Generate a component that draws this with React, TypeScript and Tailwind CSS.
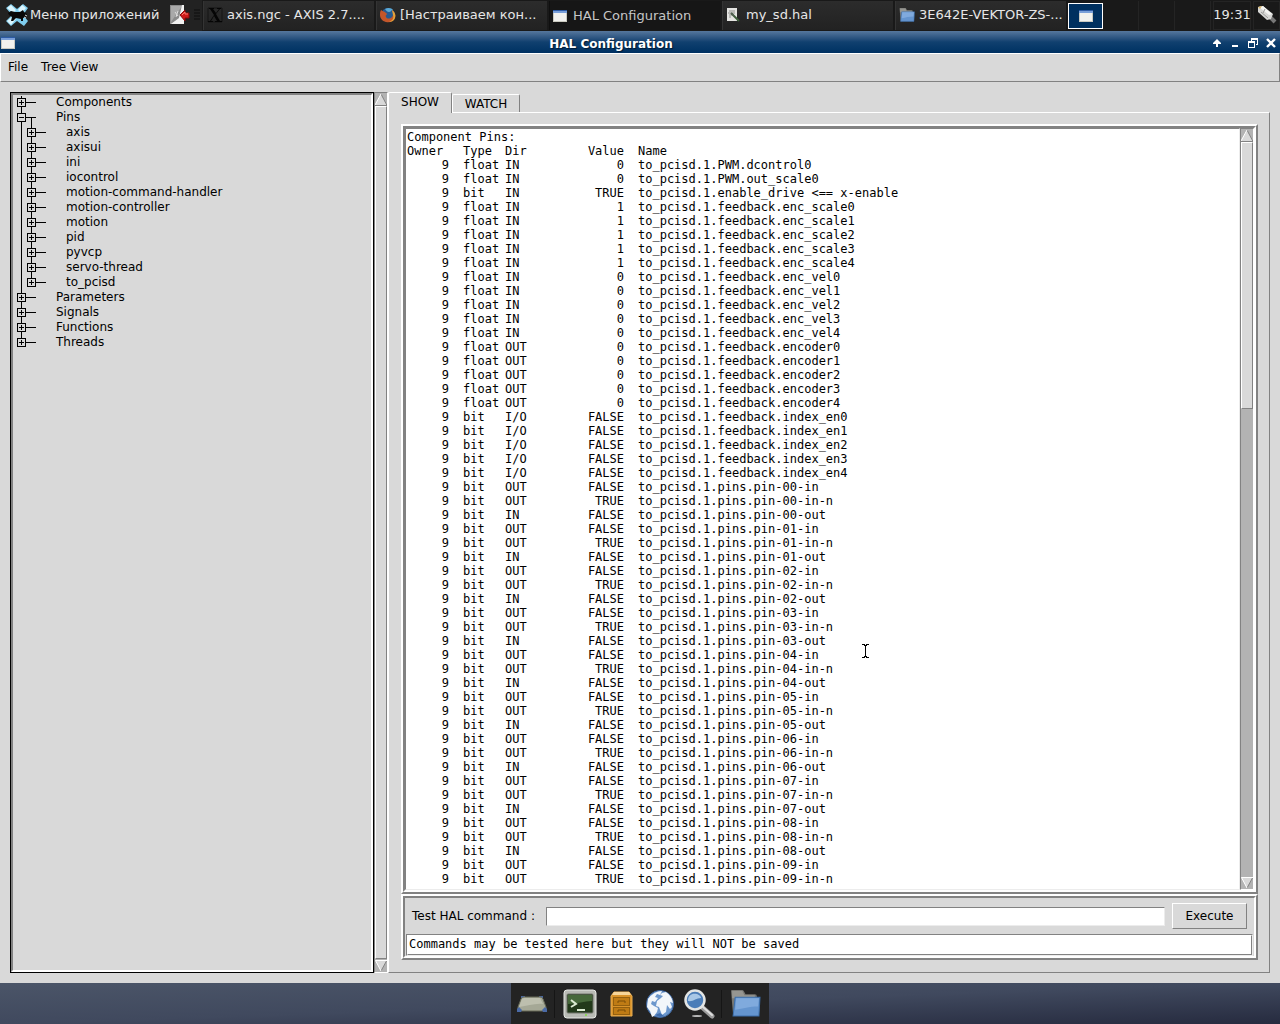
import { useState, type ReactNode } from 'react';

const sans = "font-['DejaVu_Sans','Liberation_Sans',sans-serif]";
const mono = "font-['DejaVu_Sans_Mono','Liberation_Mono',monospace]";
const raised = 'border border-t-white border-l-white border-b-[#828282] border-r-[#828282]';
const sunken = 'border border-t-[#828282] border-l-[#828282] border-b-[#ececec] border-r-[#ececec]';

type Pin = { type: string; dir: string; value: string; name: string };

const pin = (type: string, dir: string, value: string, name: string): Pin => ({ type, dir, value, name });
const five = [0, 1, 2, 3, 4];

const PINS: Pin[] = [
  pin('float', 'IN', '0', 'PWM.dcontrol0'),
  pin('float', 'IN', '0', 'PWM.out_scale0'),
  pin('bit', 'IN', 'TRUE', 'enable_drive <== x-enable'),
  ...five.map((n) => pin('float', 'IN', '1', `feedback.enc_scale${n}`)),
  ...five.map((n) => pin('float', 'IN', '0', `feedback.enc_vel${n}`)),
  ...five.map((n) => pin('float', 'OUT', '0', `feedback.encoder${n}`)),
  ...five.map((n) => pin('bit', 'I/O', 'FALSE', `feedback.index_en${n}`)),
  ...[0, 1, 2, 3, 4, 5, 6, 7, 8].flatMap((n) => [
    pin('bit', 'OUT', 'FALSE', `pins.pin-0${n}-in`),
    pin('bit', 'OUT', 'TRUE', `pins.pin-0${n}-in-n`),
    pin('bit', 'IN', 'FALSE', `pins.pin-0${n}-out`),
  ]),
  pin('bit', 'OUT', 'FALSE', 'pins.pin-09-in'),
  pin('bit', 'OUT', 'TRUE', 'pins.pin-09-in-n'),
];

const TREE = [
  { name: 'Components', children: [] },
  {
    name: 'Pins',
    children: [
      'axis', 'axisui', 'ini', 'iocontrol', 'motion-command-handler', 'motion-controller',
      'motion', 'pid', 'pyvcp', 'servo-thread', 'to_pcisd',
    ],
  },
  { name: 'Parameters', children: [] },
  { name: 'Signals', children: [] },
  { name: 'Functions', children: [] },
  { name: 'Threads', children: [] },
];

function WindowIcon() {
  return (
    <svg width="14" height="12" viewBox="0 0 14 12" className="shrink-0">
      <rect width="14" height="12" fill="#c9c9c0" />
      <rect x="1" y="3" width="12" height="8" fill="#f1f1ee" />
      <rect width="14" height="3" fill="#7a9fd8" />
      <rect width="14" height="1" fill="#2c5aa5" />
    </svg>
  );
}

function XfceIcon() {
  return (
    <svg width="22" height="22" viewBox="0 0 22 22" className="shrink-0">
      <path d="M0 4 5 0l6 5 6-5 5 4-5 7 5 6-4 5-7-5-6 5-5-5 6-6z" fill="#7fcdee" />
      <path d="M1 4 5 1l5 5-3 3zM12 6l4-5 4 3-4 5zM1 17l5-4 4 2-5 6z" fill="#dcf5fd" />
      <path d="M2 9 5 7l4 1h5l3-2 1 2 3 2-1 3-3 1v3h-2v-2l-5-1-3 3H5l1-4-3-2z" fill="#080808" />
      <path d="m19 11 2 1m-3 1 2 1" stroke="#d6d6d6" strokeWidth="1" />
    </svg>
  );
}

function ExitIcon() {
  return (
    <svg width="21" height="21" viewBox="0 0 21 21">
      <path d="M1 1h14v19H1z" fill="#d9d9d9" />
      <path d="M1 1h13L10 15 2 20H1z" fill="#8b8b8b" />
      <path d="M2 2h11L2 18z" fill="#a9a9a9" />
      <path d="M10 14 2 20h13V1h-2z" fill="#f2f2f2" />
      <path d="m6 8 3 4M9 7l-2 6" stroke="#ddd" />
      <path d="m11 11 5-5v3h4v5h-4v3z" fill="#cf1a1a" stroke="#8c0b0b" />
      <path d="m13 11 3-3v2h3" fill="none" stroke="#ff7a6e" />
    </svg>
  );
}

function XorgIcon() {
  return (
    <svg width="16" height="16" viewBox="0 0 16 16">
      <path d="M1 1h14v14H1z" fill="none" stroke="#141414" />
      <path d="M2 1h5v1H6l3 4 3-4h-2V1h4v1h-1L9 7l4 7h2v1H8v-1h2L7 9l-3 5h2v1H1v-1h2l4-6-4-6H2z" fill="#050505" />
    </svg>
  );
}

function FirefoxIcon() {
  return (
    <svg width="16" height="16" viewBox="0 0 16 16">
      <circle cx="8" cy="8" r="7" fill="#275a91" />
      <path d="M5 2c3-2 7-1 8 1-2 0-2 2-4 2S6 3 5 2z" fill="#5aa9d6" />
      <path d="M1 3c1 1 2 1 4 2 0 1 2 1 2 2S5 8 6 10s4 2 6 0 1-5 0-7c3 2 4 5 3 8-1 3-5 5-9 4S0 11 0 8c0-2 0-3 1-5z" fill="#c4562a" />
      <path d="M12 3c3 2 4 5 3 8s-4 4-6 4c4-2 5-4 4-7z" fill="#e2a23a" />
    </svg>
  );
}

function EditorIcon() {
  return (
    <svg width="14" height="14" viewBox="0 0 14 14">
      <path d="M1 0h10v13H1z" fill="#e4e4e1" />
      <path d="M3 3h6M2 5h7M3 7h3M3 9h2" stroke="#8f8f8d" />
      <path d="m5 5 8 8" stroke="#3c5c3a" strokeWidth="2" />
      <path d="m5 5 3 3" stroke="#555" />
    </svg>
  );
}

function FolderIcon({ size = 16 }: { size?: number }) {
  return (
    <svg width={size} height={size} viewBox="0 0 30 30">
      <path d="M1 3q0-1 1-1h10q1 0 2 2l1 2h9q2 0 2 2v18H3z" fill="#777773" />
      <path d="M2 3h10l2 4h10v3H2z" fill="#969691" />
      <path d="M5 9h24l-1 18H3z" fill="#6595cf" stroke="#3c6fab" />
      <path d="M6 10h22l-1 8C18 18 13 20 5 21z" fill="#80aadd" />
    </svg>
  );
}

function MouseIcon() {
  return (
    <svg width="21" height="21" viewBox="0 0 21 21">
      <path d="m14 13 5 5" stroke="#777" strokeWidth="4" />
      <path d="m2 3 5-1 10 8-2 5-4 1L2 8z" fill="#d7d7d5" />
      <path d="m3 3 4-1 9 8-3 1z" fill="#f5f5f3" />
      <path d="m2 3 4-1-2 3z" fill="#d8b56a" />
      <path d="m5 8 7 6m-3-9-2 4" stroke="#9b9b99" />
    </svg>
  );
}

function TaskButton({ icon, children, active = false }: { icon: ReactNode; children: ReactNode; active?: boolean }) {
  return (
    <button
      className={
        'flex h-[29px] min-w-0 flex-1 items-center border-l pl-[3px] text-left text-[13px] whitespace-nowrap ' +
        (active
          ? 'border-[#0f0f0f] bg-[#161616] text-[#c6c6c6]'
          : 'border-[#343434] bg-linear-to-b from-[#2c2c2c] to-[#222222] pb-0.5 text-[#e6e6e6]')
      }
    >
      <span className="flex w-5 shrink-0 items-center">{icon}</span>
      <span className="truncate">{children}</span>
    </button>
  );
}

function Taskbar() {
  return (
    <header className="flex h-[31px] items-center bg-[#191919] text-[13px] text-[#e6e6e6]">
      <div className="flex h-full w-[202px] shrink-0 items-center bg-[#222222] pb-0.5">
        <button className="flex items-center gap-0.5 pl-1.5 whitespace-nowrap">
          <XfceIcon />
          Меню приложений
        </button>
        <button aria-label="Log out" className="ml-auto">
          <ExitIcon />
        </button>
        <svg width="6" height="12" viewBox="0 0 6 12" className="mr-0.5 ml-1">
          <path d="M0 1h6M0 4h6M0 7h6M0 10h6" stroke="#0d0d0d" />
        </svg>
      </div>
      <nav className="flex min-w-0 flex-1 gap-0.5 pl-px">
        <TaskButton icon={<XorgIcon />}>axis.ngc - AXIS 2.7....</TaskButton>
        <TaskButton icon={<FirefoxIcon />}>[Настраиваем кон...</TaskButton>
        <TaskButton icon={<WindowIcon />} active>HAL Configuration</TaskButton>
        <TaskButton icon={<EditorIcon />}>my_sd.hal</TaskButton>
        <TaskButton icon={<FolderIcon />}>3E642E-VEKTOR-ZS-...</TaskButton>
      </nav>
      <div className="flex shrink-0 items-center">
        <button aria-label="Workspace 1" className="ml-0.5 flex h-[26px] w-[35px] items-center justify-center border border-white bg-[#00305f]">
          <WindowIcon />
        </button>
        <button aria-label="Workspace 2" className="h-[29px] w-9 border-r border-[#242424]" />
        <button aria-label="Workspace 3" className="h-[29px] w-9 border-r border-[#242424]" />
        <button aria-label="Workspace 4" className="h-[29px] w-9 border-r border-[#242424]" />
        <time className="ml-0.5 flex h-[29px] w-[38px] items-center justify-center border border-[#242424] pb-0.5">19:31</time>
        <button aria-label="Mouse" className="ml-0.5 flex h-[29px] w-[27px] items-center justify-center border border-[#242424] pb-0.5">
          <MouseIcon />
        </button>
      </div>
    </header>
  );
}

function TitleBar() {
  return (
    <div className="flex h-[22px] items-center bg-linear-to-b from-[#56779d] via-[#10406f] to-[#003162] pt-px pr-1 pl-px text-white">
      <WindowIcon />
      <h1 className="flex-1 pt-0.5 pr-1.5 text-center text-[12px] font-bold [text-shadow:1px_1px_1px_#001a35]">HAL Configuration</h1>
      <div className="flex items-center gap-2">
        <button aria-label="Shade">
          <svg width="10" height="10" viewBox="0 0 10 10">
            <path d="M4 9V5" fill="none" stroke="#fff" strokeWidth="2" />
            <path d="M4 1 0 5v1h8V5z" fill="#fff" />
          </svg>
        </button>
        <button aria-label="Minimize">
          <svg width="9" height="10" viewBox="0 0 9 10">
            <path d="M1 7h6v2H1z" fill="#fff" />
          </svg>
        </button>
        <button aria-label="Restore">
          <svg width="10" height="10" viewBox="0 0 10 10" shapeRendering="crispEdges">
            <path d="M0 3h7v7H0zM1 5v4h5V5zM3 0h7v7H8V6h1V2H4v1H3z" fill="#fff" fillRule="evenodd" />
          </svg>
        </button>
        <button aria-label="Close">
          <svg width="10" height="10" viewBox="0 0 10 10">
            <path d="m1 1 8 8M9 1 1 9" stroke="#fff" strokeWidth="2.4" />
          </svg>
        </button>
      </div>
    </div>
  );
}

type Lines = { first?: boolean; last?: boolean; open?: boolean; child?: boolean };

function TreeLines({ first, last, open, child }: Lines) {
  const x = child ? 18 : 8;
  return (
    <svg width={child ? 53 : 43} height="15" fill="none" stroke="#000" shapeRendering="crispEdges" className="shrink-0">
      {child && <path d="M8.5 0v15" />}
      <path d={`M${x + 0.5} ${first ? 1 : 0}V${last ? 8 : 15}M${x + 5} 7.5h10`} />
      <rect x={x - 3.5} y="3.5" width="8" height="8" fill="#d9d9d9" />
      <path d={`M${x - 2} 7.5h5`} />
      {!open && <path d={`M${x + 0.5} 5v5`} />}
      {open && <path d={`M${x + 10.5} 7v8`} />}
    </svg>
  );
}

function Tree() {
  const [open, setOpen] = useState('Pins');
  return (
    <ul className="text-[12px] leading-[15px]">
      {TREE.map((node, i) => {
        const isOpen = open === node.name && node.children.length > 0;
        return (
          <li key={node.name}>
            <button className="flex h-[15px] items-center" aria-expanded={isOpen} onClick={() => setOpen(isOpen ? '' : node.name)}>
              <TreeLines first={i === 0} last={i === TREE.length - 1} open={isOpen} />
              {node.name}
            </button>
            {isOpen && (
              <ul>
                {node.children.map((name, j) => (
                  <li key={name}>
                    <button className="flex h-[15px] items-center">
                      <TreeLines child last={j === node.children.length - 1} />
                      {name}
                    </button>
                  </li>
                ))}
              </ul>
            )}
          </li>
        );
      })}
    </ul>
  );
}

function Arrow({ down = false }: { down?: boolean }) {
  return (
    <svg width="12" height="13" viewBox="0 0 12 13" className="shrink-0">
      {down ? (
        <>
          <path d="M0 1h12L6 12z" fill="#d9d9d9" />
          <path d="M12 1 6 12" stroke="#828282" />
          <path d="M12 1.5H.5L6 12" fill="none" stroke="#fff" />
        </>
      ) : (
        <>
          <path d="M6 1 0 12h12z" fill="#d9d9d9" />
          <path d="M0 12.5h12L6 1" fill="none" stroke="#828282" />
          <path d="M6 1 0 12" stroke="#fff" />
        </>
      )}
    </svg>
  );
}

function Scrollbar({ thumb }: { thumb: string }) {
  return (
    <div className="flex w-[14px] shrink-0 flex-col border border-t-[#828282] border-r-white border-b-white border-l-[#828282] bg-[#b3b3b3]">
      <Arrow />
      <div className="min-h-0 flex-1">
        <div className={`${raised} bg-[#d9d9d9] ${thumb}`} />
      </div>
      <Arrow down />
    </div>
  );
}

function Ridge({ children }: { children: ReactNode }) {
  return (
    <div className="border-2 border-t-white border-r-[#828282] border-b-[#828282] border-l-white">
      <div className="border-2 border-t-[#828282] border-r-white border-b-white border-l-[#828282]">{children}</div>
    </div>
  );
}

function PinTable() {
  return (
    <table className={`${mono} w-full table-fixed text-left text-[12px] leading-[14px] whitespace-pre`}>
      <caption className="text-left">Component Pins:</caption>
      <colgroup>
        <col className="w-[42px]" />
        <col className="w-14" />
        <col className="w-[63px]" />
        <col className="w-14" />
        <col />
      </colgroup>
      <thead>
        <tr>
          <th className="p-0 font-normal">Owner</th>
          <th className="p-0 pl-3.5 font-normal">Type</th>
          <th className="p-0 font-normal">Dir</th>
          <th className="p-0 text-right font-normal">Value</th>
          <th className="p-0 pl-3.5 font-normal">Name</th>
        </tr>
      </thead>
      <tbody>
        {PINS.map((p) => (
          <tr key={p.name}>
            <td className="p-0 text-right">9</td>
            <td className="p-0 pl-3.5">{p.type}</td>
            <td className="p-0">{p.dir}</td>
            <td className="p-0 text-right">{p.value}</td>
            <td className="p-0 pl-3.5">to_pcisd.1.{p.name}</td>
          </tr>
        ))}
      </tbody>
    </table>
  );
}

function Tabs() {
  return (
    <div role="tablist" className="flex h-5 items-end text-[12px]">
      <button
        role="tab"
        aria-selected="true"
        className="relative -mb-px flex h-[21px] w-16 items-center justify-center rounded-t-xs border border-t-white border-r-[#828282] border-b-0 border-l-white bg-[#d9d9d9] pb-0.5"
      >
        SHOW
      </button>
      <button
        role="tab"
        aria-selected="false"
        className="flex h-[18px] w-[68px] items-center justify-center rounded-t-xs border border-t-white border-r-[#828282] border-b-0 border-l-white"
      >
        WATCH
      </button>
    </div>
  );
}

function CommandPanel() {
  const [command, setCommand] = useState('');
  return (
    <Ridge>
      <form className="flex flex-col gap-[5px] pt-[5px] text-[12px]" onSubmit={(e) => e.preventDefault()}>
        <div className="flex items-center pr-[7px] pl-[7px]">
          <label htmlFor="command" className="w-[134px] shrink-0">Test HAL command :</label>
          <input
            id="command"
            value={command}
            onChange={(e) => setCommand(e.target.value)}
            className={`${sunken} ${mono} h-[19px] min-w-0 flex-1 bg-white px-0.5 outline-none`}
          />
          <button className={`${raised} ml-[7px] h-[26px] w-[75px]`}>Execute</button>
        </div>
        <div className={`${sunken} mx-px bg-white`}>
          <p className={`${mono} border border-t-white border-r-[#828282] border-b-[#828282] border-l-white pb-0.5 pl-px leading-4`}>
            Commands may be tested here but they will NOT be saved
          </p>
        </div>
      </form>
    </Ridge>
  );
}

function Dock() {
  return (
    <footer className="flex flex-1 justify-center bg-linear-to-br from-[#4b5568] via-[#40495e] to-[#262b3f]">
      <nav className="flex h-[41px] w-[258px] items-center bg-[#232323] px-[5px]">
        <button aria-label="Show desktop" className="w-[38px]">
          <svg width="32" height="32" viewBox="0 0 32 32">
            <path d="M5 8h4v4H5zM23 8h4v4h-4z" fill="#49679e" />
            <path d="M8 9h16q2 0 3 2l3 8q1 4-2 4H4q-3 0-2-4l3-8q1-2 3-2z" fill="#a5a896" stroke="#666957" />
            <path d="M8 10h16l3 6C19 15 12 18 3 19l3-8z" fill="#bdbfae" />
            <path d="M1 24v-3l2-2 3 3-1 2zM31 24v-3l-2-2-3 3 1 2z" fill="#4a6aa6" />
          </svg>
        </button>
        <span className="h-7 w-px bg-[#151515]" />
        <button aria-label="Terminal" className="ml-2">
          <svg width="34" height="30" viewBox="0 0 34 30">
            <rect x="1" y="1" width="32" height="28" rx="3" fill="#b8bab4" stroke="#e8e9e6" />
            <rect x="4" y="5" width="26" height="19" rx="1" fill="#22391a" stroke="#73766d" />
            <path d="M5 6h24v6c-8 0-14 3-24 3z" fill="#46683a" />
            <path d="m8 11 5 4-5 3" fill="none" stroke="#dcebd2" strokeWidth="2" />
            <path d="M14 21h8" stroke="#dcebd2" strokeWidth="2" />
            <circle cx="23" cy="26" r="1" fill="#7ee03a" />
          </svg>
        </button>
        <button aria-label="File manager" className="ml-[13px]">
          <svg width="23" height="28" viewBox="0 0 23 28">
            <path d="M4 2h15l3 4v20H1V6z" fill="#d9932a" stroke="#e9ad50" />
            <path d="M4 2h15l2 3H2z" fill="#f6d59a" />
            <rect x="3.5" y="7.5" width="16" height="8" fill="#bf7b14" stroke="#94600f" />
            <rect x="3.5" y="17.5" width="16" height="7" fill="#bf7b14" stroke="#94600f" />
            <path d="M8 13v-2h7v2M8 22v-2h7v2" fill="none" stroke="#7b4e08" />
          </svg>
        </button>
        <button aria-label="Web browser" className="ml-3">
          <svg width="30" height="30" viewBox="0 0 30 30">
            <circle cx="15" cy="15" r="13.5" fill="#6c97cc" stroke="#3d649c" />
            <path d="M3 10q6-8 14-8l-2 4-3-1-2 3 3 1-3 4-3-1-1 3 3 2 4 2-1 4-3 4-2 1-2-6-3-4z" fill="#f2f6fa" />
            <path d="m17 4 4-1q6 4 7 11l-3-1 2 5-2 2-3-4-1 7-4 3-3-8-3-1 1-5 4-3 2-2-3-1z" fill="#f2f6fa" />
            <path d="m10 26 5-2 4 3-4 1z" fill="#3f6cab" />
          </svg>
        </button>
        <button aria-label="Application finder" className="ml-2">
          <svg width="32" height="30" viewBox="0 0 32 30">
            <ellipse cx="14" cy="27" rx="5" ry="1" fill="#b8b8b8" />
            <path d="m20 19 9 8" stroke="#9c9c9c" strokeWidth="5" strokeLinecap="round" />
            <path d="m20 18 9 8" stroke="#dedede" strokeWidth="2" strokeLinecap="round" />
            <circle cx="12" cy="11" r="9.5" fill="#4b7db8" stroke="#e3e5e4" strokeWidth="2.5" />
            <path d="M5 12c0-6 4-8 9-7 3 1 4 3 4 4-5 0-8 4-13 3z" fill="#a8c7e6" />
          </svg>
        </button>
        <span className="ml-1.5 h-7 w-px bg-[#151515]" />
        <button aria-label="Home folder" className="ml-2">
          <FolderIcon size={31} />
        </button>
      </nav>
    </footer>
  );
}

export default function App() {
  return (
    <div className={`${sans} flex min-h-screen flex-col bg-[#40495e] text-black`}>
      <Taskbar />
      <TitleBar />
      <div className={`${raised} flex h-[29px] items-center gap-[13px] bg-[#d9d9d9] pb-0.5 pl-[7px] text-[12px]`}>
        <button>File</button>
        <button>Tree View</button>
      </div>
      <main className="flex bg-[#d9d9d9] p-[10px]">
        <aside className="flex w-[378px] shrink-0">
          <div className="min-w-0 flex-1 border border-black">
            <div className="h-full border-2 border-t-[#828282] border-r-white border-b-white border-l-[#828282]">
              <Tree />
            </div>
          </div>
          <Scrollbar thumb="h-full" />
        </aside>
        <section className="min-w-0 flex-1">
          <Tabs />
          <div className={`${raised} pt-[11px] pr-[11px] pb-3 pl-3`}>
            <Ridge>
              <div className="relative flex">
                <div className={`${sunken} min-w-0 flex-1 bg-white px-px pt-px pb-[3px]`}>
                  <PinTable />
                </div>
                <Scrollbar thumb="h-[267px]" />
                <svg width="7" height="14" viewBox="0 0 7 14" shapeRendering="crispEdges" className="absolute top-[516px] left-[457px]">
                  <path d="M0 0h3v1H0zM4 0h3v1H4zM2 1h3v1H2zM3 2h1v10H3zM2 12h3v1H2zM0 13h3v1H0zM4 13h3v1H4z" fill="#000" />
                </svg>
              </div>
            </Ridge>
            <CommandPanel />
          </div>
        </section>
      </main>
      <Dock />
    </div>
  );
}
